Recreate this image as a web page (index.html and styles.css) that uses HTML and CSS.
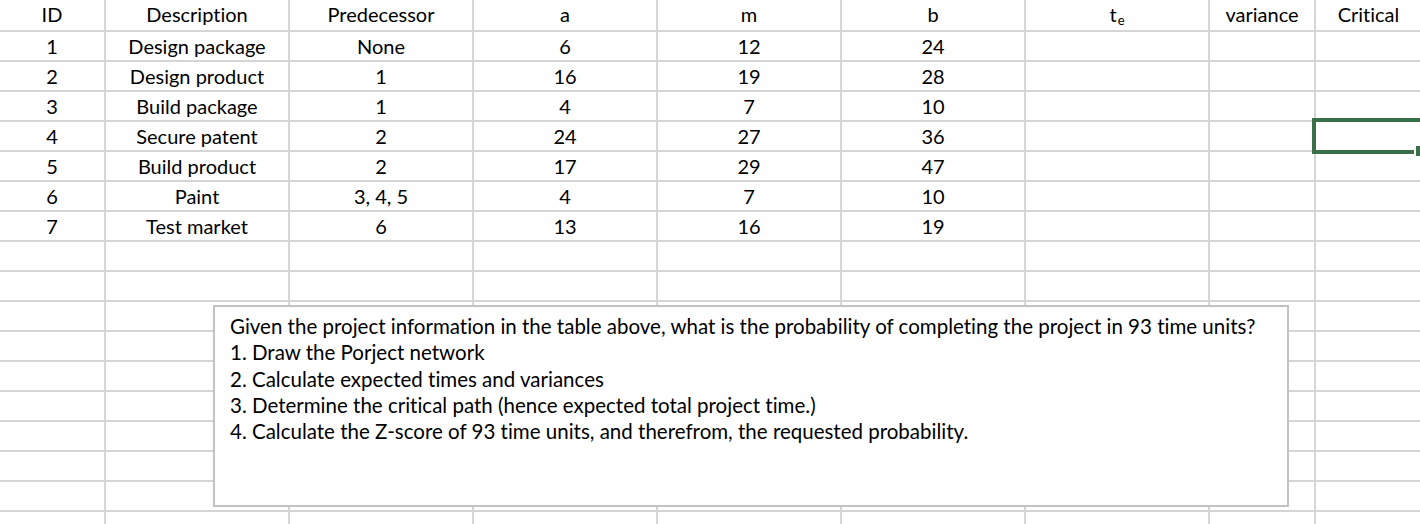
FILE: index.html
```html
<!DOCTYPE html>
<html lang="en">
<head>
<meta charset="utf-8">
<title>PERT project table</title>
<link rel="stylesheet" href="styles.css">
</head>
<body>
<div class="sheet">
  <div class="grid">
    <div class="cell hdr">ID</div>
    <div class="cell hdr">Description</div>
    <div class="cell hdr">Predecessor</div>
    <div class="cell hdr">a</div>
    <div class="cell hdr">m</div>
    <div class="cell hdr">b</div>
    <div class="cell hdr"><span class="te">t<sub>e</sub></span></div>
    <div class="cell hdr">variance</div>
    <div class="cell hdr">Critical</div>

    <div class="cell">1</div><div class="cell">Design package</div><div class="cell">None</div><div class="cell">6</div><div class="cell">12</div><div class="cell">24</div><div class="cell"></div><div class="cell"></div><div class="cell"></div>
    <div class="cell">2</div><div class="cell">Design product</div><div class="cell">1</div><div class="cell">16</div><div class="cell">19</div><div class="cell">28</div><div class="cell"></div><div class="cell"></div><div class="cell"></div>
    <div class="cell">3</div><div class="cell">Build package</div><div class="cell">1</div><div class="cell">4</div><div class="cell">7</div><div class="cell">10</div><div class="cell"></div><div class="cell"></div><div class="cell"></div>
    <div class="cell">4</div><div class="cell">Secure patent</div><div class="cell">2</div><div class="cell">24</div><div class="cell">27</div><div class="cell">36</div><div class="cell"></div><div class="cell"></div><div class="cell"></div>
    <div class="cell">5</div><div class="cell">Build product</div><div class="cell">2</div><div class="cell">17</div><div class="cell">29</div><div class="cell">47</div><div class="cell"></div><div class="cell"></div><div class="cell"></div>
    <div class="cell">6</div><div class="cell">Paint</div><div class="cell">3, 4, 5</div><div class="cell">4</div><div class="cell">7</div><div class="cell">10</div><div class="cell"></div><div class="cell"></div><div class="cell"></div>
    <div class="cell">7</div><div class="cell">Test market</div><div class="cell">6</div><div class="cell">13</div><div class="cell">16</div><div class="cell">19</div><div class="cell"></div><div class="cell"></div><div class="cell"></div>

    <div class="cell"></div><div class="cell"></div><div class="cell"></div><div class="cell"></div><div class="cell"></div><div class="cell"></div><div class="cell"></div><div class="cell"></div><div class="cell"></div>
    <div class="cell"></div><div class="cell"></div><div class="cell"></div><div class="cell"></div><div class="cell"></div><div class="cell"></div><div class="cell"></div><div class="cell"></div><div class="cell"></div>
    <div class="cell"></div><div class="cell"></div><div class="cell"></div><div class="cell"></div><div class="cell"></div><div class="cell"></div><div class="cell"></div><div class="cell"></div><div class="cell"></div>
    <div class="cell"></div><div class="cell"></div><div class="cell"></div><div class="cell"></div><div class="cell"></div><div class="cell"></div><div class="cell"></div><div class="cell"></div><div class="cell"></div>
    <div class="cell"></div><div class="cell"></div><div class="cell"></div><div class="cell"></div><div class="cell"></div><div class="cell"></div><div class="cell"></div><div class="cell"></div><div class="cell"></div>
    <div class="cell"></div><div class="cell"></div><div class="cell"></div><div class="cell"></div><div class="cell"></div><div class="cell"></div><div class="cell"></div><div class="cell"></div><div class="cell"></div>
    <div class="cell"></div><div class="cell"></div><div class="cell"></div><div class="cell"></div><div class="cell"></div><div class="cell"></div><div class="cell"></div><div class="cell"></div><div class="cell"></div>
    <div class="cell"></div><div class="cell"></div><div class="cell"></div><div class="cell"></div><div class="cell"></div><div class="cell"></div><div class="cell"></div><div class="cell"></div><div class="cell"></div>
    <div class="cell"></div><div class="cell"></div><div class="cell"></div><div class="cell"></div><div class="cell"></div><div class="cell"></div><div class="cell"></div><div class="cell"></div><div class="cell"></div>
    <div class="cell"></div><div class="cell"></div><div class="cell"></div><div class="cell"></div><div class="cell"></div><div class="cell"></div><div class="cell"></div><div class="cell"></div><div class="cell"></div>
  </div>

  <div class="selection"><span class="handle"></span></div>

  <div class="textbox">
    <p>Given the project information in the table above, what is the probability of completing the project in 93 time units?</p>
    <p>1. Draw the Porject network</p>
    <p>2. Calculate expected times and variances</p>
    <p>3. Determine the critical path (hence expected total project time.)</p>
    <p>4. Calculate the Z-score of 93 time units, and therefrom, the requested probability.</p>
  </div>
</div>
</body>
</html>
```

FILE: styles.css
```css
html, body {
  margin: 0;
  padding: 0;
  background: #ffffff;
  overflow: hidden;
}

body {
  width: 1420px;
  height: 524px;
  font-family: Lato, "Liberation Sans", sans-serif;
  font-variant-ligatures: none;
  color: #000000;
}

.sheet {
  position: relative;
  width: 1420px;
  height: 524px;
  overflow: hidden;
}

.grid {
  display: grid;
  grid-template-columns: 104px 182px 182px 182px 182px 182px 182px 104px 105px;
  grid-template-rows: 30px;
  grid-auto-rows: 28px;
  gap: 2px;
  background: #d5d5d5;
  width: 1421px;
}

.cell {
  background: #ffffff;
  display: flex;
  align-items: center;
  justify-content: center;
  font-size: 20px;
  line-height: 1;
  padding-top: 0;
  padding-bottom: 1px;
  box-sizing: border-box;
  white-space: nowrap;
}

.cell.hdr {
  padding-bottom: 2px;
}

.te {
  display: inline-block;
  line-height: 1;
}

.te sub {
  font-size: 13px;
  line-height: 0;
  vertical-align: -3px;
  margin-left: 1px;
}

.selection {
  position: absolute;
  left: 1312px;
  top: 118px;
  width: 120px;
  height: 36px;
  box-sizing: border-box;
  border: 4px solid #3b6f47;
}

.handle {
  position: absolute;
  left: 100px;
  top: 24px;
  width: 8px;
  height: 10px;
  background: #3b6f47;
  box-shadow: -2px 0 0 #ffffff;
}

.textbox {
  position: absolute;
  left: 213px;
  top: 305px;
  width: 1076px;
  height: 202px;
  box-sizing: border-box;
  border: 2px solid #c2c2c2;
  background: #ffffff;
  padding: 6px 0 0 15px;
  font-size: 20.5px;
  line-height: 26.3px;
}

.textbox p {
  margin: 0;
  white-space: nowrap;
}
```
